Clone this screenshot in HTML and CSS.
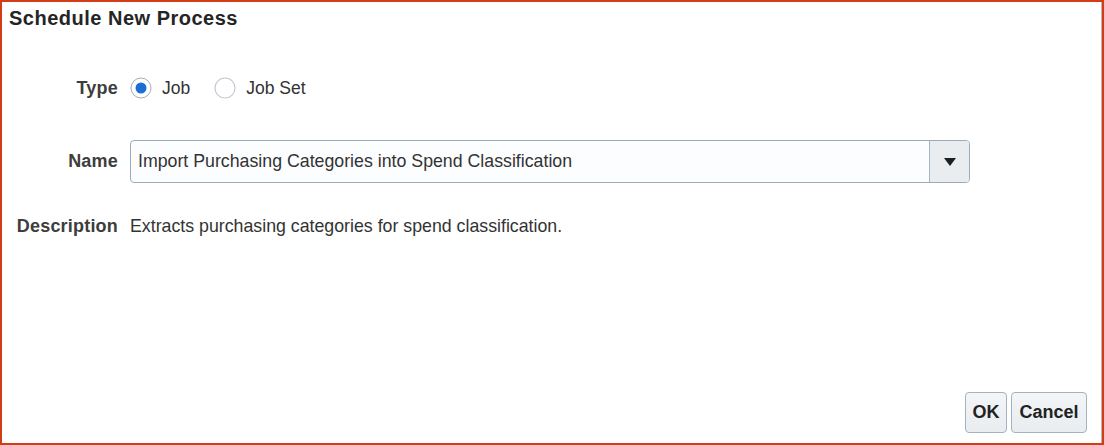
FILE: index.html
```html
<!DOCTYPE html>
<html>
<head>
<meta charset="utf-8">
<link rel="stylesheet" href="styles.css">
</head>
<body>
<div class="dialog">
  <h1 class="title">Schedule New Process</h1>
  <div class="form">
    <div class="row row-type">
      <div class="label">Type</div>
      <div class="radios">
        <label class="radio">
          <svg width="22" height="22" viewBox="0 0 22 22"><circle cx="11" cy="11" r="10" fill="#fff" stroke="#a3adb8" stroke-width="1"/><circle cx="11" cy="11" r="5.5" fill="#1a6fd4"/></svg>
          <span>Job</span>
        </label>
        <label class="radio">
          <svg width="22" height="22" viewBox="0 0 22 22"><circle cx="11" cy="11" r="10" fill="#fff" stroke="#c3cad2" stroke-width="1.2"/></svg>
          <span>Job Set</span>
        </label>
      </div>
    </div>
    <div class="row row-name">
      <div class="label">Name</div>
      <div class="select">
        <div class="select-text">Import Purchasing Categories into Spend Classification</div>
        <div class="select-btn">
          <svg width="12" height="8" viewBox="0 0 12 8"><polygon points="0,0 12,0 6,8" fill="#1e1e1e"/></svg>
        </div>
      </div>
    </div>
    <div class="row row-desc">
      <div class="label">Description</div>
      <div class="value">Extracts purchasing categories for spend classification.</div>
    </div>
  </div>
  <div class="footer">
    <button class="btn btn-ok">OK</button>
    <button class="btn btn-cancel">Cancel</button>
  </div>
</div>
</body>
</html>
```
FILE: styles.css
```css
html, body {
  margin: 0;
  padding: 0;
  background: #fff;
}
.dialog {
  box-sizing: border-box;
  width: 1104px;
  height: 445px;
  border: 2px solid #d23c17;
  box-shadow: inset -1px 0 0 #b9b9b9;
  display: flex;
  flex-direction: column;
  font-family: "Liberation Sans", Arial, sans-serif;
  color: #333;
}
.title {
  margin: 0;
  padding: 4px 0 0 7px;
  font-size: 20px;
  line-height: 24px;
  letter-spacing: 0.5px;
  font-weight: bold;
  color: #252525;
}
.form {
  display: flex;
  flex-direction: column;
  padding-left: 8px;
}
.row {
  display: flex;
  align-items: center;
}
.label {
  width: 108px;
  text-align: right;
  font-weight: bold;
  font-size: 18px;
  letter-spacing: 0.2px;
  color: #3d3d3d;
  margin-right: 12px;
  flex-shrink: 0;
}
.row-type {
  margin-top: 46px;
  height: 24px;
}
.row-name {
  margin-top: 40px;
  height: 43px;
}
.row-desc {
  margin-top: 32px;
  height: 22px;
}
.radios {
  display: flex;
  align-items: center;
}
.radio {
  display: flex;
  align-items: center;
  font-size: 17.5px;
  color: #333;
  margin-right: 24px;
}
.radio svg {
  display: block;
  margin-right: 10px;
}
.select {
  box-sizing: border-box;
  width: 840px;
  height: 43px;
  border: 1px solid #9dabb9;
  border-radius: 4px;
  display: flex;
  background: #fcfdff;
  overflow: hidden;
}
.select-text {
  flex: 1;
  padding-left: 7px;
  display: flex;
  align-items: center;
  font-size: 17.75px;
  color: #333;
}
.select-btn {
  width: 39px;
  border-left: 1px solid #a7b4c1;
  background: #e9edf0;
  display: flex;
  align-items: center;
  justify-content: center;
}
.select-btn svg {
  display: block;
}
.value {
  font-size: 17.75px;
  color: #333;
}
.footer {
  margin-top: auto;
  display: flex;
  justify-content: flex-end;
  gap: 4px;
  padding: 0 15px 10px 0;
}
.btn {
  box-sizing: border-box;
  height: 41px;
  border: 1px solid #a5b1bd;
  border-radius: 4px;
  background: linear-gradient(#f3f5f7, #e9edf0);
  font-family: "Liberation Sans", Arial, sans-serif;
  font-weight: bold;
  font-size: 18px;
  color: #222;
  padding: 0;
}
.btn-ok {
  width: 42px;
}
.btn-cancel {
  width: 76px;
}
```
